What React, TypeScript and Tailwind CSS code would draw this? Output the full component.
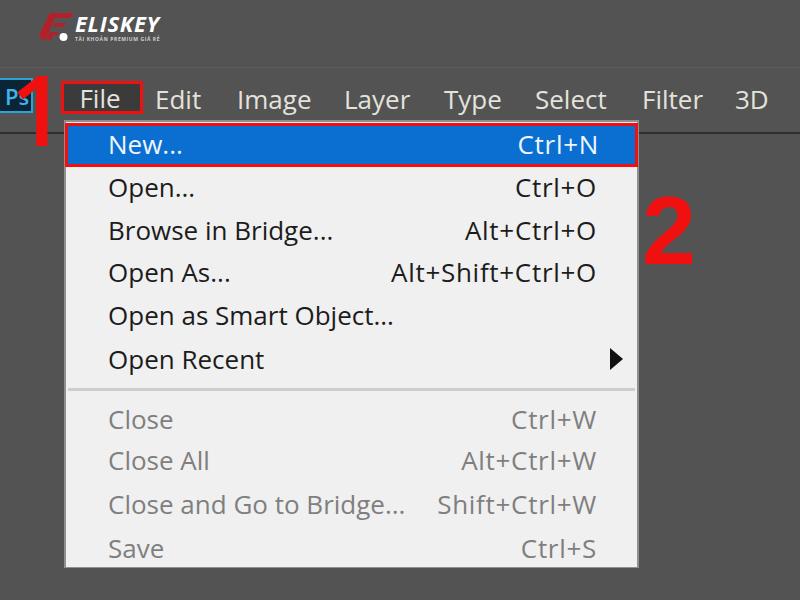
const menuBar = [
  { name: 'Edit', width: 'w-[82px]' },
  { name: 'Image', width: 'w-[107px]' },
  { name: 'Layer', width: 'w-[100px]' },
  { name: 'Type', width: 'w-[91px]' },
  { name: 'Select', width: 'w-[107px]' },
  { name: 'Filter', width: 'w-[93px]' },
  { name: '3D', width: 'w-[50px]' },
];

const topItems = [
  { label: 'Open...', keys: 'Ctrl+O', height: 'h-[45px]' },
  { label: 'Browse in Bridge...', keys: 'Alt+Ctrl+O', height: 'h-[42px]' },
  { label: 'Open As...', keys: 'Alt+Shift+Ctrl+O', height: 'h-[42px]' },
  { label: 'Open as Smart Object...', keys: '', height: 'h-[44px]' },
];

const greyItems = [
  { label: 'Close', keys: 'Ctrl+W', height: 'h-[41px]' },
  { label: 'Close All', keys: 'Alt+Ctrl+W', height: 'h-[42px]' },
  { label: 'Close and Go to Bridge...', keys: 'Shift+Ctrl+W', height: 'h-[45px]' },
  { label: 'Save', keys: 'Ctrl+S', height: 'h-[44px]' },
];

function Logo() {
  return (
    <div className="flex items-start ml-[39px] pt-[13px]">
      <svg width="36" height="28" viewBox="0 0 36 28" className="shrink-0">
        <path d="M11 0 H35 L31 5 H16 L7 26 L3 27 L0 22 Z" fill="#b3202a" />
        <path d="M16 10 H27 L24 14 H14 Z" fill="#b3202a" />
        <path d="M11 19 H20 L18 22 H14 L12 27 H7 Z" fill="#b3202a" />
        <circle cx="24.5" cy="24" r="4" fill="#ffffff" />
      </svg>
      <div className="flex flex-col mt-[-1px]">
        <span className="text-[22px] leading-[22px] font-bold italic tracking-[0.7px] text-white">ELISKEY</span>
        <span className="mt-[1px] text-[5px] leading-[8px] font-bold tracking-[0.6px] text-[#d0d0d0]">TÀI KHOẢN PREMIUM GIÁ RẺ</span>
      </div>
    </div>
  );
}

function MenuRow({ label, keys, height, grey }: { label: string; keys: string; height: string; grey?: boolean }) {
  return (
    <div className={`${height} flex items-center justify-between pl-[42px] pr-[40px] ${grey ? 'text-[#7f7f7f]' : 'text-[#1c1c1c]'}`}>
      <span>{label}</span>
      <span className="tracking-[0.7px]">{keys}</span>
    </div>
  );
}

export default function App() {
  return (
    <div className="relative w-[800px] h-[600px] overflow-hidden bg-[#535353] font-['Open_Sans',sans-serif]">
      <div className="h-[68px] border-b border-[#5c5c5c]">
        <Logo />
      </div>

      {/* Menu bar */}
      <div className="h-[66px] border-b-2 border-[#2e2e2e] flex items-start pt-[13px] text-[26px] leading-[36px] text-[#e4e2dc]">
        <div className="ml-[-2px] mt-[-3px] w-[35px] h-[35px] shrink-0 bg-[#0b2436] border-2 border-[#27a5d8] flex items-center pl-[5px] overflow-hidden text-[22px] leading-[28px] font-semibold text-[#3fb4ea]">
          Ps
        </div>
        <div className="w-[28px] shrink-0" />
        <div className="w-[82px] h-[33px] shrink-0 border-[3px] border-[#f01010] bg-[#3b3b3b] flex items-center justify-center mr-[12px] pr-[4px]">
          File
        </div>
        {menuBar.map(item => (
          <div key={item.name} className={`${item.width} shrink-0`}>{item.name}</div>
        ))}
      </div>

      {/* File dropdown */}
      <div className="absolute left-[64px] top-[120px] w-[575px] h-[448px] bg-[#f0f0f0] border-l-[2px] border-r-[2px] border-t-[2px] border-b border-[#8f8f8f] text-[26px] leading-[36px]">
        <div className="ml-[-1px] mr-[-1px] mt-[1px] h-[44px] pb-[3px] border-[3px] border-[#f01010] bg-[#0a6fd0] text-[#eef6ff] flex items-center justify-between pl-[40px] pr-[36px]">
          <span>New...</span>
          <span className="tracking-[0.7px]">Ctrl+N</span>
        </div>
        <div className="mt-[-3px]">
          {topItems.map(item => (
            <MenuRow key={item.label} {...item} />
          ))}
          <div className="h-[44px] flex items-center justify-between pl-[42px] pr-[14px] text-[#1c1c1c]">
            <span>Open Recent</span>
            <span className="w-0 h-0 border-y-[11px] border-y-transparent border-l-[13px] border-l-[#111111]" />
          </div>
          <div className="mt-[7px] mb-[7px] mx-[2px] h-[3px] bg-[#cdcdcd]" />
          {greyItems.map(item => (
            <MenuRow key={item.label} {...item} grey />
          ))}
        </div>
      </div>

      {/* Step numbers */}
      <div className="absolute left-[10px] top-[52px] text-[98px] leading-[112px] font-semibold text-[#f01010]">1</div>
      <div className="absolute left-[642px] top-[175px] text-[97px] leading-[112px] font-bold text-[#f01010] font-['Liberation_Sans',sans-serif]">2</div>
    </div>
  );
}
